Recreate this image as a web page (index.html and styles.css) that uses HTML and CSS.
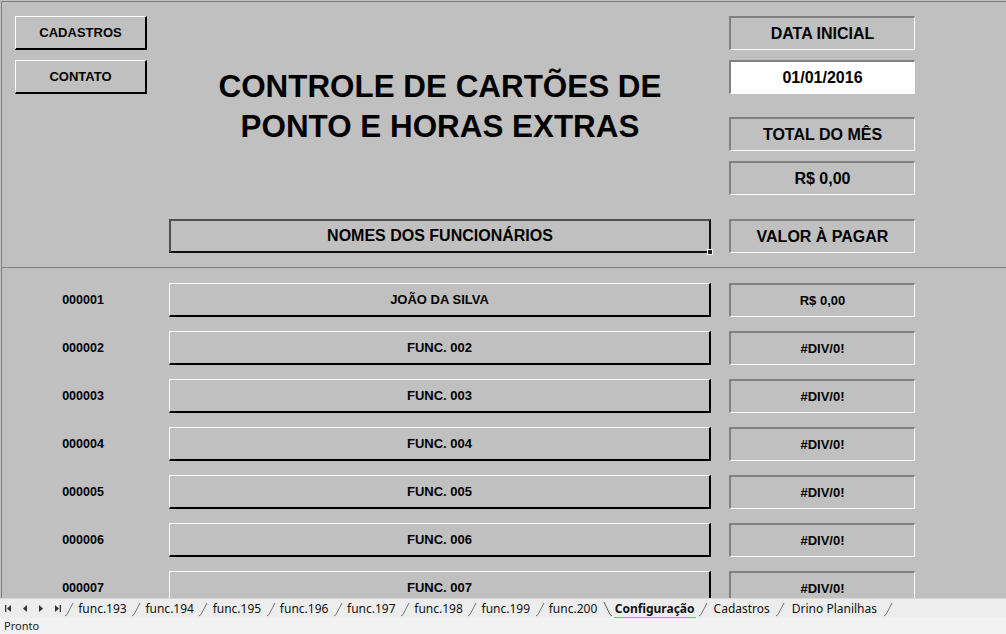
FILE: index.html
```html
<!DOCTYPE html>
<html lang="pt-BR">
<head>
<meta charset="utf-8">
<title>Controle de Cartões de Ponto</title>
<link rel="stylesheet" href="styles.css">
</head>
<body>
<div class="app">
  <div class="sheet">
    <div class="top">
      <div class="col-left">
        <div class="cell raised btn">CADASTROS</div>
        <div class="cell raised btn">CONTATO</div>
      </div>
      <div class="col-mid">
        <h1 class="title">CONTROLE DE CARTÕES DE<br>PONTO E HORAS EXTRAS</h1>
      </div>
      <div class="col-right">
        <div class="cell inset big">DATA INICIAL</div>
        <div class="cell inset big white">01/01/2016</div>
        <div class="cell inset big spaced">TOTAL DO MÊS</div>
        <div class="cell inset big">R$ 0,00</div>
      </div>
      <div class="empty"></div>
      <div class="cell selected big">NOMES DOS FUNCIONÁRIOS<span class="handle"></span></div>
      <div class="cell inset big">VALOR À PAGAR</div>
    </div>
    <div class="divider"></div>
    <div class="rows">
      <div class="row"><div class="num">000001</div><div class="cell raised">JOÃO DA SILVA</div><div class="cell inset">R$ 0,00</div></div>
      <div class="row"><div class="num">000002</div><div class="cell raised">FUNC. 002</div><div class="cell inset">#DIV/0!</div></div>
      <div class="row"><div class="num">000003</div><div class="cell raised">FUNC. 003</div><div class="cell inset">#DIV/0!</div></div>
      <div class="row"><div class="num">000004</div><div class="cell raised">FUNC. 004</div><div class="cell inset">#DIV/0!</div></div>
      <div class="row"><div class="num">000005</div><div class="cell raised">FUNC. 005</div><div class="cell inset">#DIV/0!</div></div>
      <div class="row"><div class="num">000006</div><div class="cell raised">FUNC. 006</div><div class="cell inset">#DIV/0!</div></div>
      <div class="row"><div class="num">000007</div><div class="cell raised">FUNC. 007</div><div class="cell inset">#DIV/0!</div></div>
    </div>
  </div>
  <div class="tabs">
    <svg class="nav" width="64" height="20" viewBox="0 0 64 20">
      <rect x="5" y="6" width="1.3" height="7" fill="#333"/>
      <path d="M7 9.5 L11 6 L11 13 Z" fill="#333"/>
      <path d="M23 9.5 L27 6 L27 13 Z" fill="#333"/>
      <path d="M39 6 L43 9.5 L39 13 Z" fill="#333"/>
      <path d="M55 6 L59 9.5 L55 13 Z" fill="#333"/>
      <rect x="59.7" y="6" width="1.3" height="7" fill="#333"/>
    </svg>
    <span class="sep"><svg width="12" height="20" viewBox="0 0 12 20"><path d="M2 17 L4 15.5 L10 4" fill="none" stroke="#777" stroke-width="1"/></svg></span><span class="tab">func.193</span>
    <span class="sep"><svg width="12" height="20" viewBox="0 0 12 20"><path d="M2 17 L4 15.5 L10 4" fill="none" stroke="#777" stroke-width="1"/></svg></span><span class="tab">func.194</span>
    <span class="sep"><svg width="12" height="20" viewBox="0 0 12 20"><path d="M2 17 L4 15.5 L10 4" fill="none" stroke="#777" stroke-width="1"/></svg></span><span class="tab">func.195</span>
    <span class="sep"><svg width="12" height="20" viewBox="0 0 12 20"><path d="M2 17 L4 15.5 L10 4" fill="none" stroke="#777" stroke-width="1"/></svg></span><span class="tab">func.196</span>
    <span class="sep"><svg width="12" height="20" viewBox="0 0 12 20"><path d="M2 17 L4 15.5 L10 4" fill="none" stroke="#777" stroke-width="1"/></svg></span><span class="tab">func.197</span>
    <span class="sep"><svg width="12" height="20" viewBox="0 0 12 20"><path d="M2 17 L4 15.5 L10 4" fill="none" stroke="#777" stroke-width="1"/></svg></span><span class="tab">func.198</span>
    <span class="sep"><svg width="12" height="20" viewBox="0 0 12 20"><path d="M2 17 L4 15.5 L10 4" fill="none" stroke="#777" stroke-width="1"/></svg></span><span class="tab">func.199</span>
    <span class="sep"><svg width="12" height="20" viewBox="0 0 12 20"><path d="M2 17 L4 15.5 L10 4" fill="none" stroke="#777" stroke-width="1"/></svg></span><span class="tab">func.200</span>
    <span class="sep"><svg width="12" height="20" viewBox="0 0 12 20"><path d="M3 3 L9 15.5 L11 17" fill="none" stroke="#555" stroke-width="1"/></svg></span><span class="tab active">Configuração</span>
    <span class="sep"><svg width="12" height="20" viewBox="0 0 12 20"><path d="M2 17 L4 15.5 L10 4" fill="none" stroke="#777" stroke-width="1"/></svg></span><span class="tab cad">Cadastros</span>
    <span class="sep"><svg width="12" height="20" viewBox="0 0 12 20"><path d="M2 17 L4 15.5 L10 4" fill="none" stroke="#777" stroke-width="1"/></svg></span><span class="tab wide">Drino Planilhas</span>
    <span class="sep"><svg width="12" height="20" viewBox="0 0 12 20"><path d="M2 17 L4 15.5 L10 4" fill="none" stroke="#777" stroke-width="1"/></svg></span>
  </div>
  <div class="status">Pronto</div>
</div>
</body>
</html>
```

FILE: styles.css
```css
* {
  box-sizing: border-box;
}

html, body {
  margin: 0;
  padding: 0;
  background: #c0c0c0;
}

.app {
  width: 1006px;
  height: 634px;
  display: flex;
  flex-direction: column;
  overflow: hidden;
  font-family: "Liberation Sans", Arial, sans-serif;
  color: #000;
}

.sheet {
  height: 598px;
  overflow: hidden;
  background: #c0c0c0;
  border-top: 1px solid #808080;
  border-left: 1px solid #808080;
  margin: 1px 0 0 1px;
}

.top {
  display: grid;
  grid-template-columns: 136px 542px 186px;
  grid-template-rows: 179px 34px;
  column-gap: 18px;
  row-gap: 24px;
  padding: 14px 0 0 13px;
  height: 265px;
}

.col-left {
  display: flex;
  flex-direction: column;
  gap: 10px;
}

.col-right {
  display: flex;
  flex-direction: column;
  gap: 10px;
}

.cell {
  height: 34px;
  display: flex;
  align-items: center;
  justify-content: center;
  font-weight: bold;
  font-size: 13px;
  position: relative;
  white-space: nowrap;
}

.cell.big {
  font-size: 16px;
}

.btn {
  width: 132px;
  font-size: 13px;
}

.raised {
  border-top: 1px solid #ffffff;
  border-left: 1px solid #ffffff;
  border-bottom: 2px solid #000000;
  border-right: 2px solid #000000;
}

.inset {
  border-top: 2px solid #808080;
  border-left: 2px solid #808080;
  border-bottom: 1px solid #ffffff;
  border-right: 1px solid #ffffff;
}

.white {
  background: #ffffff;
}

.spaced {
  margin-top: 13px;
}

.selected {
  border-top: 2px solid #505050;
  border-left: 2px solid #505050;
  border-bottom: 2px solid #111111;
  border-right: 2px solid #111111;
}

.handle {
  position: absolute;
  right: -4px;
  bottom: -4px;
  width: 6px;
  height: 6px;
  background: #222;
  border: 1px solid #ffffff;
}

.col-mid {
  display: flex;
  justify-content: center;
}

.title {
  margin: 51px 0 0 0;
  font-size: 31.4px;
  line-height: 40px;
  font-weight: bold;
  text-align: center;
  white-space: nowrap;
}

.divider {
  height: 1px;
  background: #808080;
  margin-left: -2px;
}

.rows {
  display: flex;
  flex-direction: column;
  gap: 14px;
  padding: 15px 0 0 13px;
}

.row {
  display: grid;
  grid-template-columns: 136px 542px 186px;
  column-gap: 18px;
  height: 34px;
  flex: none;
}

.num {
  display: flex;
  align-items: center;
  justify-content: center;
  font-weight: bold;
  font-size: 12.5px;
}

.tabs {
  height: 20px;
  background: #ededed;
  border-top: 1px solid #d8d8d8;
  display: flex;
  align-items: center;
  font-family: "Noto Sans", "Liberation Sans", sans-serif;
  font-size: 12px;
  color: #111;
}

.nav {
  flex: none;
  display: block;
}

.sep {
  display: flex;
  align-items: center;
  height: 20px;
  margin: 0 -1px;
}

.sep svg {
  display: block;
}

.tab {
  padding: 0 4.5px 0 4.2px;
  line-height: 18px;
}

.tab.active {
  font-weight: bold;
  border-bottom: 2px solid #6cc76c;
  line-height: 16px;
  margin-top: 2px;
  padding: 0 1px;
  margin-left: 2px;
  margin-right: 2px;
}

.tab.cad {
  padding-left: 6px;
  padding-right: 5px;
}

.tab.wide {
  padding-left: 7px;
  padding-right: 6px;
}

.status {
  height: 16px;
  background: #f2f2f2;
  font-family: "Noto Sans", "Liberation Sans", sans-serif;
  font-size: 11px;
  line-height: 16px;
  padding-left: 4px;
  color: #222;
}
```
